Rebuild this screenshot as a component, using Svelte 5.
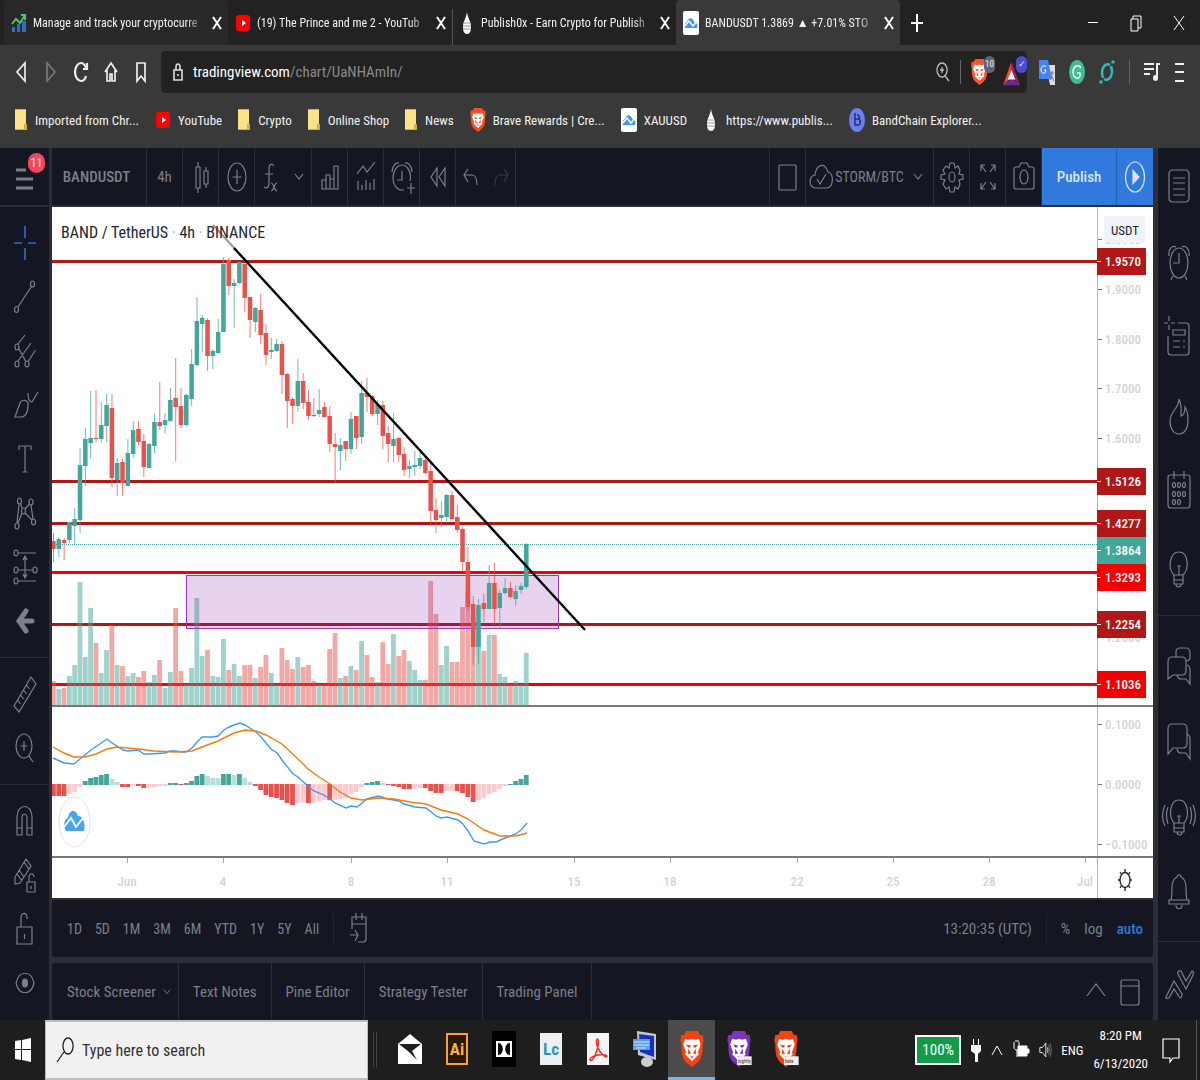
<script>
    // Ellipse as a path so every icon can be one "d" string
    const e = (cx, cy, rx, ry = rx) =>
        `M${cx - rx} ${cy}a${rx} ${ry} 0 1 0 ${rx * 2} 0a${rx} ${ry} 0 1 0 ${-rx * 2} 0`;

    // All drawn on a 28 x 40 canvas
    const icons = {
        menu: "M5 13h10M5 22h17M5 31h17",
        candles: "M11 5v5M11 31v5M9 10h4v21H9zM19 10v4M19 27v4M17 14h4v13h-4z",
        plus: e(14, 20, 9, 14) + "M14 13v14M9.500 20h9",
        fx: "M17 9c-2-3-5-2-5 2v15c0 4-2 6-5 4M8 17h8M14 26c3 0 3 8 6 8M20 26c-3 0-3 8-6 8",
        bars: "M6 32v-9h4v9zM10 32v-14h4v14M14 32V22h4M18 32V9h4v23H6",
        indicators: "M5 17l6-8 4 6 8-10M6 33v-9M10 33v-5M14 33v-10M18 33v-7M22 33v-11",
        alarmAdd:
            "M22 24c2-9-3-16-8-16s-9 6-9 13 4 12 9 12h2M14 14v9H9M4 15c0-6 4-10 7-9M24 15c0-6-4-10-7-9M19 31h8M23 26v11",
        rewind: "M13 11l-6 9 6 9zM21 11l-6 9 6 9z",
        undo: "M10 12l-4 6 4 7M6 18h8c4 0 5 4 5 10",
        redo: "M18 12l4 6-4 7M22 18h-8c-4 0-5 4-5 10",
        chevron: "M10 17l4 5 4-5",
        square: "M5 9q0-1 1-1h15q1 0 1 1v23q0 1-1 1H6q-1 0-1-1z",
        cloud: "M8 31c-7-1-6-12 0-13 1-10 10-14 13-3 6 1 6 15-1 16zM10 22l3 5 6-10",
        gear:
            "M12 6h4l1 5 3-2 2 4-1 4 4 1v4l-4 1 1 4-2 5-3-2-1 5h-4l-1-5-3 2-3-5 2-4-4-1v-4l4-1-2-4 3-4 3 2z" +
            e(14, 20, 3, 5),
        expand: "M7 14V8h4M7 8l5 7M21 14V8h-4M21 8l-5 7M7 26v6h4M7 32l5-7M21 26v6h-4M21 32l-5-7",
        camera: "M4 12q0-2 2-2h3l2-4h6l2 4h3q2 0 2 2v18q0 2-2 2H6q-2 0-2-2z" + e(14, 20, 4, 7),
        play: e(14, 20, 9.500, 15),
        trend: e(5.500, 32.500, 2, 3) + e(21.500, 7, 2, 3) + "M7 30L20 10",
        pitchfork: e(6, 16, 2, 3) + e(6, 33, 2, 3) + e(16, 33, 2, 3) + "M7 13l7-9M7 30l13-18M8 18l6.500 12M17.500 30l7-11",
        brush: "M4 32l5-14c2-4 9-4 8 3 0 7-3 11-7 11zM17 8c0 6 1 9 4 9l6-10",
        text: "M8 11V7h12v4M14 7v26M11.500 33h5",
        pattern: e(6, 33, 2, 3) + e(8.500, 8, 2, 3) + e(12.500, 18, 2, 3) + e(20, 9, 2, 3) + e(22.500, 29, 2, 3) +
            "M6 30l2-19M9.500 11l2 5M14 16l4.500-5M14 20l7 7M20 12l2 14M11 20l-4 10",
        projection: e(5, 6, 2, 3) + e(5, 23, 2, 3) + e(24, 23, 2, 3) + e(5, 34, 2, 3) + "M7 6h18M7 23h15M7 34h18M14 9v22M12 13l2-4 2 4M12 27l2 4 2-4",
        ruler: "M3 32L20 3l5 7L8 38zM6.500 26l3 4M9.500 21l3 4M12.500 16l3 4M15.500 11l3 4",
        zoom: e(13, 18, 8, 12) + "M13 13v10M9.500 18h7M18 28l4 6",
        magnet: "M6 34V16c0-14 15-14 15 0v18h-5V17c0-5-5-5-5 0v17zM6 27h5M16 27h5",
        pencilLock: "M4 22L15 4l5 7L9 28l-5 1zM13 7l5 7M6 19l5 7M8 15l5 7M16 27h8v10h-8zM18 27v-4c0-6 5-5 5-1M20 31v3",
        lock: "M6 18h15v17H6zM10 18V9c0-6 6-6 6-1v2M13.500 25v5",
        eye: "M5 20c3-13 15-13 18 0-3 13-15 13-18 0",
        list: "M4 8q0-4 4-4h12q4 0 4 4v24q0 4-4 4H8q-4 0-4-4zM8 12h12M8 17h12M8 23h12M8 29h12",
        alarm: e(14, 21, 9, 15) + "M14 11v10H8M4 14c-1-8 4-11 7-9M24 14c1-8-4-11-7-9M8 34l-2 4M20 34l2 4",
        listAdd: "M3 18v16q0 3 3 3h15q3 0 3-3V8q0-3-3-3H13M4-2v5M4 7v5M-1 5h4M6 5h4M8 12h12v5H8zM8 23h7M18 23h2M8 29h7M18 29h2",
        fire: "M14 5c0 10-9 12-9 22 0 8 4 13 9 13s9-5 9-14c0-6-1-10-3-13 0 4-1 8-4 9 0-6 1-11-2-17",
        calendar:
            "M3 7q0-2 3-2h16q3 0 3 2v28q0 3-3 3H6q-3 0-3-3zM9 1v8M19 1v8" +
            [15, 24, 32].map((y) => [9, 14, 19].map((x) => (x === 19 && y === 32 ? "" : e(x, y, 1.500, 2.500))).join("")).join(""),
        bulb: "M9 29c-7-7-4-23 5-23s11 16 4 23zM9 29v5h9v-5M9 34v4h9v-4M11 38c0 4 5 4 5 0M12 20h4M14 20v9",
        chats: "M3 35V18q0-5 4-5h10q4 0 4 4v10q0 4-4 4H8zM11 13V8q0-4 4-4h6q4 0 4 5v4q0 4-4 4M12 31q1 4 4 4h5l4 5V26q0-4-3-5",
        chat: "M3 34V9q0-5 4-5h11q4 0 4 5v14q0 5-4 5H8zM12 29q1 4 4 4h5l4 6V19q0-4-3-5",
        idea: "M9 27c-6-7-4-23 5-23s11 16 5 23zM9 27v5h10v-5M9 32v4h10v-4M12 36c0 4 5 4 5 0M12 20h4M14 20v7M3 11c-2 5-2 11 0 17M0 9c-3 7-3 15 0 21M25 11c2 5 2 11 0 17M28 9c3 7 3 15 0 21",
        bell: "M6 28c1-4 1-8 1-13 0-6 3-9 5-10 0-3 4-3 4 0 2 1 5 4 5 10 0 5 0 9 1 13zM4 28h20v4H4zM11 33c0 5 6 5 6 0",
        zigzag: "M1 31L9 15l8 13q0 4-2 4l-6-9-5 9q-4 1-3-1zM13 8l8 15 7-14q1-4-1-4l-6 10-5-10q-4-1-3 3z",
        goto: "M8 20V8h14v22q0 3-3 3h-5M8 15h14M12 4v7M18 4v7M6 26h8M11 21l3 5-3 6",
        up: "M5 24l9-12 9 12",
        panel: "M5 10q0-2 2-2h14q2 0 2 2v21q0 2-2 2H7q-2 0-2-2zM5 14h18",
    };

    const drawGroups = [
        ["crosshair", "trend", "pitchfork", "brush", "text", "pattern", "projection", "back"],
        ["ruler", "zoom"],
        ["magnet", "pencilLock", "lock", "eye"],
    ];
    const sideGroups = [
        ["list", "alarm", "listAdd", "fire", "calendar", "bulb"],
        ["chats", "chat", "idea", "bell"],
        ["zigzag"],
    ];

    const tabs = [
        { title: "Manage and track your cryptocurre", icon: "stats", hover: true },
        { title: "(19) The Prince and me 2 - YouTub", icon: "youtube" },
        { title: "Publish0x - Earn Crypto for Publish", icon: "drop" },
        { title: "BANDUSDT 1.3869 ▲ +7.01% STO", icon: "tv", active: true },
    ];

    const bookmarks = [
        ["folder", "Imported from Chr..."],
        ["youtube", "YouTube"],
        ["folder", "Crypto"],
        ["folder", "Online Shop"],
        ["folder", "News"],
        ["brave", "Brave Rewards | Cre..."],
        ["tv", "XAUUSD"],
        ["drop", "https://www.publis..."],
        ["band", "BandChain Explorer..."],
    ];

    const ranges = ["1D", "5D", "1M", "3M", "6M", "YTD", "1Y", "5Y", "All"];
    const panels = ["Stock Screener", "Text Notes", "Pine Editor", "Strategy Tester", "Trading Panel"];

    // Chart data: high, body top, body bottom, low, up (1) or down (0), volume
    const step = 5.313;
    const candles = [
        [326, 334, 342, 355, 0, 24], [330, 332, 342, 350, 1, 16], [331, 333, 336, 353, 0, 17],
        [315, 315, 333, 336, 1, 29], [301, 312, 319, 338, 1, 40], [241, 258, 313, 326, 1, 123],
        [221, 232, 259, 279, 1, 48], [184, 231, 236, 252, 1, 97], [183, 231, 232, 235, 0, 62],
        [195, 218, 232, 236, 1, 32], [187, 198, 219, 235, 1, 55], [187, 201, 271, 280, 0, 80],
        [251, 256, 273, 289, 1, 40], [252, 255, 276, 289, 0, 39], [232, 246, 279, 279, 1, 29],
        [214, 223, 247, 251, 1, 32], [214, 222, 235, 238, 0, 28], [227, 234, 260, 270, 0, 34],
        [236, 237, 261, 261, 1, 23], [206, 215, 239, 246, 1, 30], [175, 215, 219, 223, 0, 45],
        [206, 213, 218, 226, 1, 17], [181, 193, 214, 214, 1, 33], [151, 191, 200, 254, 0, 97],
        [181, 199, 218, 221, 0, 34], [187, 188, 218, 220, 1, 21], [142, 157, 192, 199, 1, 37],
        [90, 114, 158, 159, 1, 107], [108, 111, 117, 145, 1, 49], [111, 113, 149, 164, 0, 55],
        [142, 144, 149, 162, 1, 29], [112, 125, 146, 146, 1, 28], [50, 57, 125, 125, 1, 66],
        [51, 53, 79, 88, 0, 35], [72, 76, 79, 121, 1, 41], [54, 55, 76, 77, 1, 29],
        [50, 57, 91, 105, 0, 40], [90, 90, 113, 131, 0, 40], [100, 101, 115, 125, 1, 27],
        [87, 103, 128, 137, 0, 38], [117, 126, 148, 158, 0, 50], [131, 143, 145, 152, 1, 32],
        [132, 137, 144, 145, 1, 21], [134, 137, 168, 187, 0, 57], [166, 167, 194, 221, 0, 45],
        [190, 192, 199, 217, 0, 36], [152, 174, 199, 205, 1, 48], [166, 174, 196, 202, 0, 38],
        [183, 195, 209, 213, 0, 40], [191, 208, 209, 210, 0, 24], [182, 203, 207, 210, 1, 21],
        [195, 200, 210, 210, 0, 21], [199, 209, 237, 245, 0, 56], [226, 237, 240, 276, 0, 72],
        [231, 238, 244, 263, 1, 27], [234, 234, 242, 254, 0, 29], [205, 212, 242, 247, 1, 39],
        [209, 209, 231, 242, 0, 35], [174, 186, 230, 237, 1, 64], [171, 186, 190, 205, 0, 50],
        [188, 189, 207, 209, 0, 28], [193, 197, 207, 218, 1, 23], [194, 198, 229, 242, 0, 63],
        [219, 226, 237, 255, 0, 41], [206, 232, 239, 255, 1, 71], [230, 231, 248, 255, 0, 49],
        [240, 247, 263, 269, 0, 55], [253, 259, 262, 271, 1, 44], [244, 258, 260, 269, 1, 35],
        [245, 251, 259, 262, 1, 25], [248, 253, 266, 267, 0, 25], [256, 264, 304, 319, 0, 124],
        [291, 303, 313, 326, 0, 91], [294, 308, 311, 320, 1, 40], [287, 288, 310, 314, 1, 59],
        [284, 288, 312, 313, 0, 43], [298, 310, 323, 326, 0, 43], [320, 322, 355, 365, 0, 98],
        [340, 355, 400, 404, 0, 112], [389, 397, 440, 458, 0, 91], [392, 398, 440, 457, 1, 84],
        [387, 396, 402, 415, 0, 54], [358, 376, 402, 402, 1, 70], [356, 376, 402, 418, 0, 70],
        [383, 386, 401, 422, 1, 31], [371, 381, 386, 388, 1, 28], [375, 381, 390, 391, 0, 21],
        [378, 384, 392, 399, 1, 24], [376, 379, 383, 387, 1, 21], [336, 337, 380, 382, 1, 52],
    ];

    const histogram = [
        -12, -12, -12, -10, -8, -3, 4, 7, 8, 10, 11, 6, 3, -3, -3, -1, -2, -4, -3.8, -3, -2, -1.8, 2, 2, -1, 2, 4, 9, 11,
        9, 7, 6.9, 11, 11, 10, 11, 7, 3, -2, -6, -11, -13, -14, -16, -19, -21, -19, -18.500, -19.100, -19, -17, -16, -16.200,
        -16, -15, -14, -10, -8, -3, 2, 3, 4, 2, -1, -2, -3, -5, -5, -4.900, -4, -4.100, -7, -9, -9, -7, -6.900, -7.100, -9, -13,
        -18, -16, -14, -10, -8, -5, -2, 1, 4, 6, 10,
    ];

    // Bars fade when the histogram moves back towards zero
    function barColor(v, prev) {
        if (v > 0) return v >= prev ? "#42a69a" : "#b6dfdb";
        return v <= prev ? "#e8524d" : "#fccbcf";
    }

    const macd =
        "1,551 12,556 22,557 28,552 39,543 55,532 60,536 65,539 71,543 76,544 86,543 92,547 97,547 113,546 118,544 124,544 129,545 134,545 140,541 145,535 150,530 161,530 166,529 172,523 177,520 182,518 188,516 193,518 204,525 209,530 219,542 225,546 230,553 241,567 246,570 258,581 262,584 272,588 278,592 283,596 294,601 299,599 305,600 315,592 326,589 336,592 347,594 352,597 363,600 374,601 384,609 389,611 395,610 406,613 411,617 416,624 422,634 432,637 438,635 444,635 453,631 464,627 469,623 475,616";
    const signal =
        "1,540 12,546 22,550 33,550 44,547 55,542 65,540 86,542 102,544 124,545 140,544 150,540 166,534 182,526 193,523 204,524 214,528 230,537 246,552 256,562 267,570 278,577 288,585 299,591 310,593 326,591 342,592 358,595 374,597 389,603 406,607 416,612 432,623 448,629 464,629 475,626";

    const levels = [
        { price: "1.9570", y: 54, tag: 54, color: "#b01818" },
        { price: "1.5126", y: 274, tag: 274, color: "#b01818" },
        { price: "1.4277", y: 316, tag: 316, color: "#b01818" },
        { price: "1.3864", y: 337, tag: 343, color: "#42a69a", last: true },
        { price: "1.3293", y: 365, tag: 370, color: "#f40000" },
        { price: "1.2254", y: 417, tag: 417, color: "#b01818" },
        { price: "1.1036", y: 477, tag: 477, color: "#f40000" },
    ];
    const prices = [
        ["2.0000", 33], ["1.9000", 83], ["1.8000", 133], ["1.7000", 182], ["1.6000", 232], ["1.3000", 382],
        ["1.2000", 431], ["0.1000", 518], ["0.0000", 578], ["−0.1000", 638],
    ];
    const dates = [
        ["Jun", 75], ["4", 171], ["8", 299], ["11", 395], ["15", 522], ["18", 618], ["22", 745], ["25", 841],
        ["28", 937], ["Jul", 1033],
    ];
</script>

{#snippet icon(name)}
    <svg class="icon icon-{name}" viewBox="0 0 28 40" aria-hidden="true">
        {#if name === "crosshair"}
            <path class="blue" d="M14 3v12M14 25v12M3 20h8M17 20h8" />
        {:else if name === "back"}
            <path class="arrow" d="M15 10L8 20l7 10M8 20h13" />
        {:else}
            <path d={icons[name]} />
            {#if name === "eye"}
                <ellipse class="solid" cx="14" cy="20" rx="2.500" ry="4" />
            {/if}
            {#if name === "play"}
                <path class="solid" d="M12 13.500l6 6.500-6 6.500z" />
            {/if}
        {/if}
    </svg>
{/snippet}

{#snippet lion(color, label)}
    <path
        fill={color}
        d="M6 0h12l2 4 3 0 1 6-1 3c0 10-1 15-5 19l-6 5-6-5C2 28 1 23 1 13L0 10l1-6 3 0z"
    />
    <path
        fill="#fff"
        d="M5 8l4 1 3-1 3 1 4-1 2 6-3 8 1 2-3 3-4 4-4-4-3-3 1-2-3-8z"
    />
    <path fill={color} d="M6 14l5 1-1 2-2 0zM18 14l-5 1 1 2 2 0zM8 18l3 5-3 1zM16 18l-3 5 3 1zM10 26h4l-2 2z" />
    {#if label}
        <rect x="10" y="26" width="15" height="9" fill="#eee" />
        <text x="11" y="33" font-size="5" fill="#333">{label}</text>
    {/if}
{/snippet}

{#snippet favicon(name)}
    {#if name === "folder"}
        <svg class="folder" viewBox="0 0 12 22"><path fill="#fbe28a" d="M0 0h11v15l1 1v5H0z" /><path fill="#dcae2c" d="M0 0h11v1H0zM0 20h12v1H0zM9 15l3 1v5h-3z" /></svg>
    {:else if name === "youtube"}
        <svg class="fav" viewBox="0 0 16 24"><rect x="1" y="4" width="14" height="16" rx="3" fill="#f00" /><path fill="#fff" d="M7 9l4 3-4 3z" /></svg>
    {:else if name === "brave"}
        <svg class="fav" viewBox="0 0 24 37">{@render lion("#fa4d1e", "")}</svg>
    {:else if name === "tv"}
        <svg class="fav" viewBox="0 0 16 24"><rect width="16" height="24" rx="2" fill="#fff" /><path fill="#3b96f5" d="M2 17c-1-4 1-6 2-6 1-5 6-5 7 0 3 0 4 4 3 6z" /><path fill="none" stroke="#fff" stroke-width="1.500" d="M2 15l4-5 4 5 4-5" /></svg>
    {:else if name === "drop"}
        <svg class="fav" viewBox="0 0 16 24"><path fill="#fff" d="M8 1c1 7 4 9 4 15 0 4-1 7-4 7s-4-3-4-7C4 10 7 8 8 1" /><path stroke="#999" d="M5 12h6M4 15h8M4 18h8" /></svg>
    {:else if name === "band"}
        <svg class="fav" viewBox="0 0 16 24"><ellipse cx="8" cy="12" rx="8" ry="12" fill="#6c7ff0" /><path fill="none" stroke="#27306b" stroke-width="1.500" d="M6 5v12h3c3 0 3-6 0-6H6M8 7c3 0 3 4 1 4" /></svg>
    {:else}
        <svg class="fav" viewBox="0 0 16 24"><path fill="#2c6fc4" d="M1 16h3v5H1zM6 13h3v8H6zM11 10h4v11h-4z" /><path fill="none" stroke="#4fc46b" stroke-width="2" d="M1 13l4-5 4 4 5-8M10 4h4v5" /></svg>
    {/if}
{/snippet}

<div class="window">
    <header class="browser">
        <div class="tabbar">
            {#each tabs as tab}
                <div class="tab" class:active={tab.active} class:hover={tab.hover}>
                    {@render favicon(tab.icon)}
                    <span class="tab-title">{tab.title}</span>
                    <button class="close" aria-label="Close tab">
                        <svg viewBox="0 0 10 14"><path d="M1 1l8 12M9 1L1 13" /></svg>
                    </button>
                </div>
            {/each}
            <button class="new-tab" aria-label="New tab">
                <svg viewBox="0 0 12 20"><path d="M6 1v18M0 10h12" /></svg>
            </button>
            <div class="window-buttons">
                <button aria-label="Minimize"><svg viewBox="0 0 12 18"><path d="M1 8.500h10" /></svg></button>
                <button aria-label="Restore"><svg viewBox="0 0 12 18"><path d="M1 5h7v12H1zM3 5V2h8v12H8" /></svg></button>
                <button aria-label="Close"><svg viewBox="0 0 12 18"><path d="M1 2l10 14M11 2L1 16" /></svg></button>
            </div>
        </div>

        <div class="address-row">
            <div class="nav-buttons">
                <button aria-label="Back"><svg viewBox="0 0 16 24"><path d="M12 3v18L4 12z" /></svg></button>
                <button aria-label="Forward" class="dim"><svg viewBox="0 0 16 24"><path d="M4 3v18l8-9z" /></svg></button>
                <button aria-label="Reload"><svg viewBox="0 0 16 24"><path class="thick" d="M13 16c-1 4-3 5-5 5-3 0-6-4-6-9s3-9 6-9c2 0 4 2 5 5M14 3v6h-4" /></svg></button>
                <button aria-label="Home"><svg viewBox="0 0 16 24"><path d="M2 12l6-9 6 9M4 10v11h3v-7h2v7h3V10" /></svg></button>
                <button aria-label="Bookmark"><svg viewBox="0 0 16 24"><path d="M4 3h8v18l-4-5-4 5z" /></svg></button>
            </div>
            <div class="address">
                <svg class="padlock" viewBox="0 0 10 20"><path d="M1 8h8v10H1zM3 8V5c0-4 4-4 4 0v3M5 12v2" /></svg>
                <span class="url">tradingview.com<span class="path">/chart/UaNHAmIn/</span></span>
                <svg class="find" viewBox="0 0 14 22"><path d="M6 2a5 7 0 1 0 .1 0M6 6v6M4 9h4M9 15l4 5" /></svg>
                <span class="bar"></span>
                <span class="ext">
                    <svg viewBox="0 0 24 37">{@render lion("#fb542b", "")}</svg>
                    <span class="ext-count">10</span>
                </span>
                <span class="ext">
                    <svg viewBox="0 0 18 28"><path fill="#ff4724" d="M9 3L0 28l9-9z" /><path fill="#9e1f63" d="M9 3l9 25-9-9z" /><path fill="#662d91" d="M0 28h18l-9-8z" /><path fill="#fff" d="M9 12l4 10H5z" /></svg>
                    <span class="ext-count ok">✓</span>
                </span>
            </div>
            <div class="extensions">
                <svg viewBox="0 0 16 26"><path fill="#ddd" d="M7 6h9v20h-5z" /><path fill="#4285f4" d="M0 1h9l4 19H0z" /><path stroke="#777" fill="none" d="M10 14h5M13 12v2c0 3-1 6-2 7M12 16l3 6" /><path fill="none" stroke="#fff" d="M7 8C4 5 2 8 2 11s4 6 5 0H5" /></svg>
                <svg viewBox="0 0 16 26"><ellipse cx="8" cy="13" rx="8" ry="12" fill="#3dbf92" /><path fill="none" stroke="#fff" stroke-width="1.500" d="M12 9c-3-5-8-1-8 4s5 9 7 4v-3H8" /></svg>
                <svg viewBox="0 0 16 26"><path fill="none" stroke="#31b8bb" stroke-width="2.500" d="M11 6C6 3 1 10 4 19M5 20c5 3 10-4 7-13" /><circle cx="14" cy="3" r="1.800" fill="#31b8bb" /><circle cx="2" cy="23" r="1.800" fill="#31b8bb" /></svg>
                <span class="bar"></span>
                <svg viewBox="0 0 16 26"><path fill="none" stroke="#eee" stroke-width="2" d="M0 5h10M0 10h10M0 15h6M13 19V5h3" /><ellipse cx="11.500" cy="19" rx="2.500" ry="3" fill="#eee" /></svg>
                <svg class="more" viewBox="0 0 10 26"><path stroke="#eee" stroke-width="2" d="M1 5h9M1 13h9M1 22h9" /></svg>
            </div>
        </div>

        <nav class="bookmarks">
            {#each bookmarks as [kind, name]}
                <a href="#{name}">{@render favicon(kind)}{name}</a>
            {/each}
        </nav>
    </header>

    <div class="app">
        <div class="left">
            <button class="menu" aria-label="Menu">{@render icon("menu")}<span class="count">11</span></button>
            {#each drawGroups as group}
                <div class="group">
                    {#each group as name}
                        <button aria-label={name}>{@render icon(name)}</button>
                    {/each}
                </div>
            {/each}
        </div>

        <div class="center">
            <div class="toolbar">
                <button class="symbol">BANDUSDT</button>
                <button>4h</button>
                <button aria-label="Candles">{@render icon("candles")}</button>
                <button aria-label="Compare">{@render icon("plus")}</button>
                <button class="functions" aria-label="Indicators">{@render icon("fx")}{@render icon("chevron")}</button>
                <button aria-label="Financials">{@render icon("bars")}</button>
                <button aria-label="Templates">{@render icon("indicators")}</button>
                <button aria-label="Alert">{@render icon("alarmAdd")}</button>
                <button aria-label="Replay">{@render icon("rewind")}</button>
                <span class="history">
                    <button aria-label="Undo">{@render icon("undo")}</button>
                    <button class="off" aria-label="Redo">{@render icon("redo")}</button>
                </span>
                <span class="space"></span>
                <button aria-label="Layout">{@render icon("square")}</button>
                <button class="layout">{@render icon("cloud")}STORM/BTC{@render icon("chevron")}</button>
                <button aria-label="Settings">{@render icon("gear")}</button>
                <button aria-label="Fullscreen">{@render icon("expand")}</button>
                <button aria-label="Snapshot">{@render icon("camera")}</button>
                <button class="publish">Publish</button>
                <button class="stream" aria-label="Stream">{@render icon("play")}</button>
            </div>

            <svg class="chart" viewBox="0 0 1101 691">
                <line x1="1045.500" x2="1045.500" y1="0" y2="691" stroke="#b5b5b5" />
                {#each prices as [label, y]}
                    <path d="M1046 {y - 0.5}h4" stroke="#777" />
                    <text class="scale" x="1053" y={y + 4}>{label}</text>
                {/each}
                <rect x="1052" y="9" width="41" height="27" rx="3" fill="#f0f3fa" />
                <text class="currency" x="1073" y="28" text-anchor="middle">USDT</text>

                {#each levels as level}
                    {#if level.last}
                        <line x1="0" x2="1045" y1={level.y + 0.5} y2={level.y + 0.5} stroke={level.color} stroke-dasharray="1 1" />
                    {:else}
                        <rect y={level.y - 1} width="1045" height="3" fill={level.color} />
                    {/if}
                {/each}

                {#each candles as c, i}
                    <rect x={i * step - 1} y={498 - c[5]} width="4.800" height={c[5]} fill={c[4] ? "#42a69a" : "#e8524d"} opacity="0.500" />
                {/each}

                <rect x="134" y="368" width="373" height="53" fill="#8e24aa" fill-opacity="0.200" />
                <rect x="134.500" y="368.500" width="372" height="53" fill="none" stroke="#9b35bd" />

                {#each candles as c, i}
                    {@const color = c[4] ? "#42a69a" : "#e8524d"}
                    <rect x={i * step + 1} y={c[0]} width="1" height={c[3] - c[0]} fill={color} opacity="0.750" />
                    <rect x={i * step - 0.8} y={c[1]} width="4.500" height={Math.max(1, c[2] - c[1])} fill={color} />
                {/each}

                <path d="M161 18l23 25" stroke="#999" stroke-width="2" />
                <path d="M182 41L533 423" stroke="#000" stroke-width="2.400" />
                <text class="title" x="9" y="31">BAND / TetherUS <tspan fill="#b2b5be">·</tspan> 4h <tspan fill="#b2b5be">·</tspan> BINANCE</text>

                {#each histogram as v, i}
                    <rect x={i * step - 1} y={v > 0 ? 578 - v : 577} width="4.800" height={Math.abs(v)} fill={barColor(v, histogram[i - 1] ?? 0)} />
                {/each}
                <polyline points={macd} fill="none" stroke="#3d9bf5" stroke-width="1.400" />
                <polyline points={signal} fill="none" stroke="#f57c0a" stroke-width="1.400" />

                <ellipse cx="22.500" cy="615" rx="15.500" ry="25" fill="#fff" stroke="#e3e3e3" />
                <path fill="#4aa3f0" d="M14 624c-3-6-2-12 2-13 1-9 8-9 10-2 5-1 8 9 6 15z" />
                <path d="M12 620l7-9 5 9 8-10" fill="none" stroke="#fff" stroke-width="1.800" />

                <rect y="498" width="1101" height="2" fill="#787878" />
                <rect y="649" width="1101" height="2" fill="#787878" />
                {#each dates as [label, x]}
                    <path d="M{x + 0.5} 651v5" stroke="#aaa" />
                    <text class="scale" {x} y="679" text-anchor="middle">{label}</text>
                {/each}

                {#each levels as level}
                    <rect x="1045" y={level.tag - 13} width="49" height="27" fill={level.color} />
                    <path d="M1045 {level.tag + 0.5}h4" stroke="#fff" />
                    <text class="tag" x="1053" y={level.tag + 5}>{level.price}</text>
                {/each}
                <ellipse cx="1073" cy="673" rx="5" ry="7.500" fill="none" stroke="#222" stroke-width="1.300" />
                <path d="M1073 662v4M1073 680v4M1066 673h2M1078 673h2M1068 665l2 3M1078 665l-2 3M1068 681l2-3M1078 681l-2-3" stroke="#222" stroke-width="1.300" />
            </svg>

            <div class="range-bar">
                <div class="ranges">
                    {#each ranges as range}
                        <button>{range}</button>
                    {/each}
                </div>
                <span class="divider"></span>
                <button class="goto-date" aria-label="Go to date">{@render icon("goto")}</button>
                <span class="space"></span>
                <button>13:20:35 (UTC)</button>
                <span class="divider"></span>
                <button>%</button>
                <button>log</button>
                <button class="auto">auto</button>
            </div>

            <div class="panels">
                {#each panels as panel, i}
                    <button class="panel">{panel}{#if i === 0}{@render icon("chevron")}{/if}</button>
                {/each}
                <span class="space"></span>
                <button aria-label="Expand">{@render icon("up")}</button>
                <button aria-label="Maximize">{@render icon("panel")}</button>
            </div>
        </div>

        <div class="right">
            {#each sideGroups as group}
                <div class="group">
                    {#each group as name}
                        <button aria-label={name}>{@render icon(name)}</button>
                    {/each}
                </div>
            {/each}
        </div>
    </div>

    <footer class="taskbar">
        <button class="start" aria-label="Start">
            <svg viewBox="0 0 16 26"><path fill="#fff" d="M0 4l6-1v9H0zM7 3l9-2v11H7zM0 13h6v10l-6-1zM7 13h9v12l-9-2z" /></svg>
        </button>
        <label class="search">
            <svg viewBox="0 0 18 28"><path d="M12 2a5 8 0 1 0 .1 0M8 16L1 26" /></svg>
            <input type="text" placeholder="Type here to search" aria-label="Search" />
        </label>
        <span class="grip"></span>
        <div class="programs">
            <button aria-label="Mail"><svg viewBox="0 0 24 36"><path fill="#fff" d="M0 13L12 3l12 10v20H0z" /><path fill="#1e1e1e" d="M1 13h22l-9 7 5 9-8-8z" /></svg></button>
            <button aria-label="Illustrator"><svg viewBox="0 0 24 36"><rect x="2" y="3" width="20" height="30" fill="#2b1804" stroke="#f9a12a" stroke-width="2" /><text x="12" y="24" text-anchor="middle" font-size="17" font-weight="700" fill="#fbb03b">Ai</text></svg></button>
            <button aria-label="Dolby"><svg viewBox="0 0 24 36"><rect width="24" height="36" fill="#000" /><rect x="4" y="10" width="16" height="16" fill="#fff" /><path d="M6 12h1c5 1 5 11 0 12H6zM18 12h-1c-5 1-5 11 0 12h1z" /></svg></button>
            <button aria-label="LiveCycle"><svg viewBox="0 0 24 36"><rect x="1" y="2" width="22" height="32" fill="#eef0f0" /><text x="12" y="24" text-anchor="middle" font-size="17" font-weight="700" fill="#2a95c5">Lc</text></svg></button>
            <button aria-label="Acrobat"><svg viewBox="0 0 24 36"><rect x="1" y="2" width="22" height="32" fill="#f3f3f3" /><path fill="none" stroke="#e0302b" stroke-width="1.500" d="M11 8c3 0 1 9-1 14-2 6-5 9-6 7-1-3 8-6 15-5 4 1 1 3-2 0-4-3-8-12-6-16" /></svg></button>
            <button aria-label="Remote desktop"><svg viewBox="0 0 24 36"><ellipse cx="14" cy="31" rx="6" ry="5" fill="#ccc" /><path fill="#c8c8c8" d="M4 0l19 3v26L5 24z" /><path fill="#1230c8" d="M6 3l15 2v21L7 21z" /><path fill="#5a9fe0" d="M0 8h17v11H0z" /><path stroke="#dbeafa" d="M1 11h15M1 14h15M3 17h10" /></svg></button>
            <button class="current" aria-label="Brave"><svg viewBox="0 0 24 37">{@render lion("#fa4112", "")}</svg></button>
            <button aria-label="Brave nightly"><svg viewBox="0 0 24 37">{@render lion("#7b35b8", "nightly")}</svg></button>
            <button aria-label="Brave beta"><svg viewBox="0 0 24 37">{@render lion("#fa4112", "beta")}</svg></button>
        </div>
        <div class="tray">
            <span class="battery">100%</span>
            <svg class="plug" viewBox="0 0 10 24"><path fill="#fff" d="M2 1h1v6h4V1h1v6h2v6L7 16v8H4v-8L0 13V7h2z" /></svg>
            <svg class="line" viewBox="0 0 12 24"><path d="M1 17l5-9 5 9" /></svg>
            <svg class="line wide" viewBox="0 0 16 24"><path d="M1 4v5c0 4 5 4 5 0V4M3 4V2M5 4V2M4 12v7" /><path class="white" d="M5 8h9v10H5zM14 11h2v4h-2z" /></svg>
            <svg class="line" viewBox="0 0 14 24"><path d="M1 9h3l4-5v16l-4-5H1zM10 9q1 3 0 6" /><path class="faint" d="M11 6q3 6 0 12M13 4q3 8 0 16" /></svg>
            <span class="lang">ENG</span>
            <time>8:20 PM<br />6/13/2020</time>
            <svg class="note" viewBox="0 0 18 28"><path d="M1 3h16v19h-6l-3 4v-4H1z" /></svg>
            <span class="edge"></span>
        </div>
    </footer>
</div>

<style>
    :global(body) {
        background: #141722;
    }

    .window {
        display: flex;
        flex-direction: column;
        min-height: 100vh;
        font-family: "Roboto Condensed", "Open Sans", sans-serif;
        font-size: 15px;
        overflow: hidden;
    }

    button {
        display: flex;
        align-items: center;
        justify-content: center;
        padding: 0;
        border: 0;
        background: none;
        color: inherit;
        font: inherit;
        white-space: nowrap;
    }

    svg {
        flex: none;
        display: block;
    }

    .icon {
        width: 28px;
        height: 40px;
        fill: none;
        stroke: currentColor;
        stroke-width: 1.2;
        overflow: visible;
    }

    .icon-menu {
        stroke-width: 3;
    }

    .icon .blue {
        stroke: #2f6fd0;
        stroke-width: 1.6;
    }

    .icon .solid {
        fill: currentColor;
    }

    .icon .arrow {
        stroke-width: 5;
        stroke-linecap: round;
    }

    .space {
        flex: 1;
    }

    /* Browser */
    .browser {
        background: #393939;
        color: #f1f1f1;
        font-size: 13px;
    }

    .tabbar {
        display: flex;
        height: 45px;
        padding-left: 4px;
        background: #222;
    }

    .tab {
        display: flex;
        align-items: center;
        gap: 6px;
        box-sizing: border-box;
        width: 224px;
        padding: 0 6px;
        border-left: 1px solid transparent;
    }

    .tab:nth-child(3) {
        border-image: linear-gradient(#222 22%, #555 22%) 1;
    }

    .tab.hover {
        background: #292929;
        border-radius: 4px 4px 0 0;
    }

    .tab.active {
        background: #393939;
        border-radius: 4px 4px 0 0;
    }

    .tab-title {
        flex: 1;
        overflow: hidden;
        font-size: 12px;
        white-space: nowrap;
        mask-image: linear-gradient(to right, #000 88%, transparent);
    }

    .fav {
        width: 16px;
        height: 24px;
    }

    .folder {
        width: 12px;
        height: 22px;
        margin-right: 1px;
    }

    .close svg {
        width: 10px;
        height: 14px;
        stroke: #fff;
        stroke-width: 2;
    }

    .new-tab {
        width: 34px;
    }

    .new-tab svg {
        width: 12px;
        height: 20px;
        stroke: #fff;
        stroke-width: 2;
    }

    .window-buttons {
        display: flex;
        margin-left: auto;
    }

    .window-buttons button {
        width: 43px;
    }

    .window-buttons svg {
        width: 12px;
        height: 18px;
        fill: none;
        stroke: #fff;
    }

    .address-row {
        display: flex;
        align-items: center;
        height: 54px;
    }

    .nav-buttons {
        display: flex;
        padding: 0 5px 0 6px;
    }

    .nav-buttons button {
        width: 30px;
        height: 40px;
    }

    .nav-buttons svg {
        width: 16px;
        height: 24px;
        fill: none;
        stroke: #eee;
        stroke-width: 1.7;
    }

    .nav-buttons .thick {
        stroke-width: 2.2;
    }

    .nav-buttons .dim {
        opacity: 0.35;
    }

    .address {
        flex: 1;
        display: flex;
        align-items: center;
        gap: 10px;
        height: 42px;
        padding: 0 2px 0 12px;
        border-radius: 5px;
        background: #222;
    }

    .padlock {
        width: 10px;
        height: 20px;
        fill: none;
        stroke: #ddd;
        stroke-width: 1.6;
    }

    .url {
        flex: 1;
        color: #fff;
        font-size: 15px;
    }

    .url .path {
        color: #8b8b8b;
    }

    .find {
        width: 14px;
        height: 22px;
        fill: none;
        stroke: #bbb;
        stroke-width: 1.3;
    }

    .bar {
        width: 1px;
        height: 24px;
        background: #666;
    }

    .ext {
        position: relative;
        width: 22px;
    }

    .ext svg {
        width: 17px;
        height: 28px;
    }

    .ext-count {
        position: absolute;
        top: -2px;
        right: -2px;
        width: 11px;
        border-radius: 8px;
        background: #5f6475;
        font-size: 9px;
        line-height: 17px;
        text-align: center;
    }

    .ext-count.ok {
        background: #4c4fd6;
    }

    .extensions {
        display: flex;
        align-items: center;
        gap: 14px;
        padding: 0 16px 0 12px;
    }

    .extensions svg {
        width: 16px;
        height: 26px;
    }

    .extensions .more {
        width: 10px;
    }

    .bookmarks {
        display: flex;
        align-items: center;
        gap: 16px;
        height: 49px;
        padding: 0 14px 7px 15px;
        box-sizing: border-box;
    }

    .bookmarks a {
        display: flex;
        align-items: center;
        gap: 7px;
        color: inherit;
        text-decoration: none;
        white-space: nowrap;
    }

    /* Trading app */
    .app {
        flex: 1;
        display: grid;
        grid-template-columns: 49px 1fr 42px;
        background: #2b2d39;
        color: #7c7f8a;
    }

    .left,
    .right {
        background: #141722;
    }

    .left .menu {
        position: relative;
        width: 100%;
        height: 59px;
        border-bottom: 2px solid #2b2d39;
    }

    .count {
        position: absolute;
        top: 5px;
        right: 4px;
        width: 17px;
        border-radius: 10px;
        background: #f5455c;
        color: #fff;
        font-size: 12px;
        line-height: 20px;
        text-align: center;
    }

    .left .group {
        padding: 9px 0;
        border-bottom: 1px solid #2b2d39;
    }

    .left .group button {
        width: 100%;
        height: 54px;
    }

    .left .group:last-child,
    .right .group:last-child {
        border-bottom: 0;
    }

    .right .group {
        padding-bottom: 11px;
        border-bottom: 1px solid #2b2d39;
    }

    .right .group + .group {
        padding-top: 10px;
    }

    .right .group:last-child {
        padding-bottom: 0;
    }

    .right .group button {
        width: 100%;
        height: 76px;
    }

    .right .group:last-child button {
        height: 68px;
    }

    .center {
        display: flex;
        flex-direction: column;
        min-width: 0;
        padding: 0 5px 0 3px;
    }

    .toolbar {
        display: flex;
        height: 57px;
        margin-bottom: 2px;
        background: #141722;
    }

    .toolbar > * {
        width: 36px;
        box-sizing: border-box;
        border-right: 1px solid #2b2d39;
    }

    .toolbar .symbol {
        width: 95px;
        padding-right: 5px;
        font-weight: 500;
    }

    .toolbar .functions {
        width: 57px;
        padding-left: 4px;
    }

    .toolbar .history {
        display: flex;
        align-items: center;
        justify-content: center;
        width: 60px;
    }

    .toolbar .off {
        opacity: 0.35;
    }

    .toolbar .layout {
        width: 128px;
        font-size: 14px;
    }

    .toolbar .publish,
    .toolbar .stream {
        background: #3179dc;
        color: #dbe6f8;
    }

    .toolbar .publish {
        width: 75px;
        border-right-color: #2561b4;
        font-weight: 500;
    }

    .toolbar .stream {
        border: 0;
    }

    .chart {
        width: 100%;
        background: #fff;
    }

    .scale {
        fill: #d4d4d4;
        font-size: 13px;
        font-weight: 500;
    }

    .tag {
        fill: #fff;
        font-size: 13px;
        font-weight: 500;
    }

    .currency {
        fill: #22252e;
        font-size: 13px;
    }

    .title {
        fill: #22252e;
        font-size: 16px;
    }

    .range-bar,
    .panels {
        display: flex;
        align-items: center;
        box-sizing: border-box;
        height: 57px;
        border-radius: 3px;
        background: #141722;
    }

    .range-bar {
        gap: 14px;
        margin: 2px 0 6px;
        padding: 0 10px 0 15px;
    }

    .ranges {
        display: flex;
        gap: 13px;
        font-size: 14px;
    }

    .divider {
        width: 1px;
        height: 32px;
        background: #20232f;
    }

    .goto-date {
        width: 20px;
    }

    .auto {
        color: #2f77dd;
        font-weight: 500;
    }

    .panels {
        padding-right: 9px;
    }

    .panels .panel {
        height: 100%;
        padding: 0 14px;
        border-right: 1px solid #2b2d39;
    }

    .panels .panel:first-child {
        padding: 0 0 0 15px;
    }

    .panels .icon {
        margin-left: 6px;
    }

    .panels .panel .icon {
        width: 22px;
        margin-left: 0;
    }

    /* Taskbar */
    .taskbar {
        display: flex;
        height: 60px;
        background: #1e1e1e;
        color: #fff;
    }

    .start {
        width: 45px;
    }

    .start svg {
        width: 16px;
        height: 26px;
    }

    .search {
        display: flex;
        align-items: center;
        gap: 8px;
        box-sizing: border-box;
        width: 323px;
        padding: 0 10px;
        border: 2px solid #bdbdbd;
        border-width: 2px 1px;
        background: #f1f1f1;
    }

    .search svg {
        width: 18px;
        height: 28px;
        fill: none;
        stroke: #222;
        stroke-width: 1.3;
    }

    .search input {
        flex: 1;
        min-width: 0;
        padding: 0;
        border: 0;
        outline: 0;
        background: none;
        font: inherit;
        font-size: 16px;
    }

    .search input::placeholder {
        color: #333;
    }

    .grip {
        width: 2px;
        height: 36px;
        margin: 12px 9px 0 5px;
        border: 1px solid #444;
        border-width: 0 1px;
    }

    .programs {
        display: flex;
    }

    .programs button {
        box-sizing: border-box;
        width: 47px;
        border-bottom: 3px solid transparent;
    }

    .programs button.current {
        border-bottom-color: #76b4ec;
        background: #4b4b4b;
    }

    .programs svg {
        width: 24px;
        height: 36px;
        overflow: visible;
    }

    .tray {
        display: flex;
        align-items: center;
        gap: 10px;
        margin-left: auto;
        font-size: 13px;
    }

    .battery {
        box-sizing: border-box;
        width: 46px;
        border: 2px solid #fff;
        background: #159a4a;
        font-size: 15px;
        line-height: 26px;
        text-align: center;
    }

    .plug {
        width: 10px;
        height: 24px;
    }

    .line {
        width: 12px;
        height: 24px;
        fill: none;
        stroke: #fff;
        overflow: visible;
    }

    .line.wide {
        width: 16px;
    }

    .white {
        fill: #fff;
    }

    .faint {
        opacity: 0.4;
    }

    time {
        line-height: 28px;
        text-align: center;
    }

    .note {
        width: 18px;
        height: 28px;
        margin-left: 4px;
        fill: none;
        stroke: #fff;
        stroke-width: 1.2;
    }

    .edge {
        width: 1px;
        height: 100%;
        margin: 0 3px 0 6px;
        background: #555;
    }
</style>
